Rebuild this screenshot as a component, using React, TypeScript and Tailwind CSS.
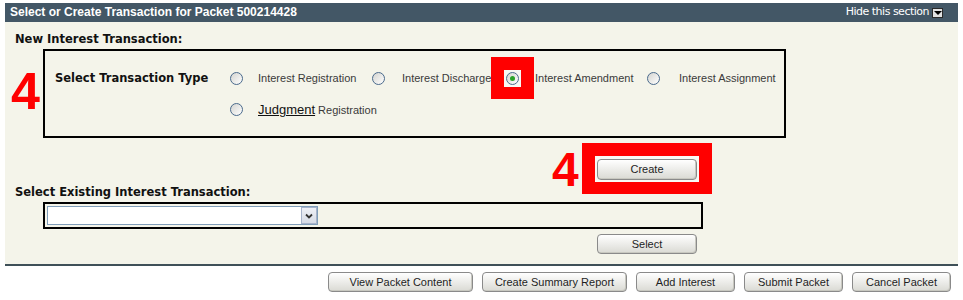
import React from "react";

const arial = { fontFamily: '"Liberation Sans", Arial, sans-serif' };

function Radio({ checked }: { checked?: boolean }) {
  return (
    <span className="relative inline-block w-[13px] h-[13px] rounded-full border border-[#4a6a8c] bg-gradient-to-br from-[#d4d4d0] to-white">
      {checked && (
        <span className="absolute left-[3px] top-[3px] w-[5px] h-[5px] rounded-full bg-[#2aa22a]" />
      )}
    </span>
  );
}

function Btn({ label, w }: { label: string; w: string }) {
  return (
    <div
      className={`${w} h-[20px] rounded-[4px] border border-[#8a8a8a] bg-gradient-to-b from-white to-[#dadad4] shadow-[inset_-1px_-1px_0_#c8c8c0] flex items-center justify-center text-[11px] text-[#1e1e1e] whitespace-nowrap font-['Liberation_Sans',Arial,sans-serif]`}
    >
      {label}
    </div>
  );
}

export default function App() {
  return (
    <div className="w-[963px] h-[300px] bg-white overflow-hidden">
      <div className="ml-[5px] w-[953px] pt-[3px]">
        {/* header */}
        <div className="h-[19px] bg-[#435766] flex items-center justify-between pl-[5px] pr-[15px]">
          <span className="text-white font-bold text-[12px] leading-[19px] font-['Liberation_Sans',Arial,sans-serif]">
            Select or Create Transaction for Packet 500214428
          </span>
          <span className="flex items-center gap-[3px]">
            <span className="text-white text-[11px] tracking-[-0.5px] font-['DejaVu_Sans',Verdana,sans-serif]">
              Hide this section
            </span>
            <span className="w-[11px] h-[10px] bg-[#e2e2e2] border border-[#2a2a2a] flex items-center justify-center">
              <span className="w-0 h-0 border-l-[4px] border-r-[4px] border-t-[4px] border-l-transparent border-r-transparent border-t-black" />
            </span>
          </span>
        </div>

        {/* body */}
        <div className="relative bg-[#f4f4ea] border-b-2 border-[#3f5058] pt-[10px] pb-[10px]">
          <div className="pl-[10px] h-[14px] leading-[14px] text-[11.5px] font-bold text-[#111] font-['DejaVu_Sans',Verdana,sans-serif]">
            New Interest Transaction:
          </div>

          <div className="ml-[38px] mt-[3px] w-[743px] h-[89px] border-2 border-black flex pt-[6px]">
            <div className="w-[185px] pl-[10px] h-[42px] pt-[1px] flex items-center text-[11.5px] font-bold text-[#111] font-['DejaVu_Sans',Verdana,sans-serif]">
              Select Transaction Type
            </div>
            <div className="flex flex-col text-[11px] text-[#3a3a3a] whitespace-nowrap" style={arial}>
              <div className="h-[42px] flex items-center">
                <div className="w-[28px] shrink-0 flex items-center"><Radio /></div>
                <div className="w-[114px] shrink-0">Interest Registration</div>
                <div className="w-[30px] shrink-0 flex items-center"><Radio /></div>
                <div className="w-[89px] shrink-0 overflow-visible">Interest Discharge</div>
                <div className="w-[43px] h-[42px] shrink-0 bg-[#ff0000] flex items-center justify-center">
                  <div className="w-[17px] h-[17px] bg-[#f8f8f4] flex items-center justify-center">
                    <Radio checked />
                  </div>
                </div>
                <div className="w-[113px] shrink-0 pl-[1px]">Interest Amendment</div>
                <div className="w-[32px] shrink-0 flex items-center"><Radio /></div>
                <div>Interest Assignment</div>
              </div>
              <div className="h-[21px] flex items-center">
                <div className="w-[28px] flex items-center"><Radio /></div>
                <div className="flex items-baseline">
                  <span className="text-[13px] underline text-[#111]">Judgment</span>
                  <span className="ml-[3px]">Registration</span>
                </div>
              </div>
            </div>
          </div>

          {/* create row */}
          <div className="mt-[21px] h-[21px] flex">
            <div className="ml-[592px] relative">
              <div className="absolute -left-[15px] -top-[16px] w-[130px] h-[51px] border-[13px] border-b-[12px] border-[#ff0000] bg-[#f9f9f4]" />
              <div className="relative">
                <Btn label="Create" w="w-[100px] h-[21px]" />
              </div>
            </div>
          </div>

          <div className="mt-[5px] pl-[10px] h-[14px] leading-[14px] text-[11.5px] font-bold text-[#111] font-['DejaVu_Sans',Verdana,sans-serif]">
            Select Existing Interest Transaction:
          </div>

          <div className="ml-[38px] mt-[3px] w-[660px] h-[27px] border-2 border-black pt-[2px] pl-[2px]">
            <div className="relative w-[271px] h-[19px] border border-[#7f9db9] bg-white">
              <div className="absolute right-0 top-0 w-[16px] h-[17px] border border-[#a7b3cb] bg-gradient-to-b from-[#eef0f6] to-[#d6dbe6] flex items-center justify-center">
                <svg width="8" height="6" viewBox="0 0 8 6">
                  <path d="M1 1.5 L4 4.5 L7 1.5" fill="none" stroke="#333" strokeWidth="1.8" />
                </svg>
              </div>
            </div>
          </div>

          <div className="mt-[5px] h-[20px] flex">
            <div className="ml-[592px]">
              <Btn label="Select" w="w-[100px]" />
            </div>
          </div>

          {/* annotations */}
          <div className="absolute left-[6px] top-[43px] text-[52px] leading-[52px] font-bold text-[#ff0000]" style={arial}>
            4
          </div>
          <div className="absolute left-[547px] top-[124px] text-[48px] leading-[48px] font-bold text-[#ff0000]" style={arial}>
            4
          </div>
        </div>

        {/* bottom buttons */}
        <div className="mt-[6px] flex justify-end gap-[9px] pr-[7px]">
          <Btn label="View Packet Content" w="w-[145px]" />
          <Btn label="Create Summary Report" w="w-[145px]" />
          <Btn label="Add Interest" w="w-[99px]" />
          <Btn label="Submit Packet" w="w-[99px]" />
          <Btn label="Cancel Packet" w="w-[99px]" />
        </div>
      </div>
    </div>
  );
}
